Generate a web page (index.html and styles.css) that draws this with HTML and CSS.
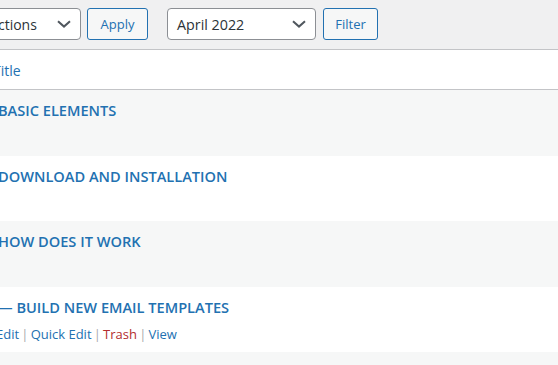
FILE: index.html
```
<!DOCTYPE html>
<html lang="en">
<head>
  <meta charset="UTF-8" />
  <title>Posts</title>
  <link rel="stylesheet" href="styles.css">
</head>
<body>
  <div class="page">
    <!-- Bulk actions / filters -->
    <div class="tablenav">
      <div class="fake-select bulk">
        <span>Bulk actions</span>
        <svg class="chev" width="14" height="8" viewBox="0 0 14 8"><path d="M1 1.2 L7 6.6 L13 1.2" fill="none" stroke="#50575e" stroke-width="2"/></svg>
      </div>
      <button class="btn apply">Apply</button>
      <div class="fake-select month">
        <span>April 2022</span>
        <svg class="chev" width="14" height="8" viewBox="0 0 14 8"><path d="M1 1.2 L7 6.6 L13 1.2" fill="none" stroke="#50575e" stroke-width="2"/></svg>
      </div>
      <button class="btn filter">Filter</button>
    </div>

    <div class="list">
      <div class="list-head"><a href="#">Title</a></div>

      <div class="row alt">
        <a class="row-title" href="#">BASIC ELEMENTS</a>
        <div class="row-actions hidden">Edit | Quick Edit | Trash | View</div>
      </div>
      <div class="row">
        <a class="row-title" href="#">DOWNLOAD AND INSTALLATION</a>
        <div class="row-actions hidden">Edit | Quick Edit | Trash | View</div>
      </div>
      <div class="row alt">
        <a class="row-title" href="#">HOW DOES IT WORK</a>
        <div class="row-actions hidden">Edit | Quick Edit | Trash | View</div>
      </div>
      <div class="row">
        <a class="row-title" href="#">— BUILD NEW EMAIL TEMPLATES</a>
        <div class="row-actions"><a href="#">Edit</a> <span class="sep">|</span> <a href="#">Quick Edit</a> <span class="sep">|</span> <a href="#" class="trash">Trash</a> <span class="sep">|</span> <a href="#">View</a></div>
      </div>
      <div class="row alt">
        <a class="row-title" href="#">&nbsp;</a>
      </div>
    </div>
  </div>
</body>
</html>
```

FILE: styles.css
```
body {
  margin: 0;
  background: #f0f0f1;
  font-family: 'Open Sans', 'Noto Sans', sans-serif;
  color: #3c434a;
  overflow: hidden;
}
a {
  color: #2271b1;
  text-decoration: none;
}
.page {
  width: 558px;
  height: 365px;
  overflow: hidden;
}
.tablenav {
  display: flex;
  align-items: center;
  height: 49px;
  padding-bottom: 1px;
  box-sizing: border-box;
}
.fake-select {
  display: flex;
  align-items: center;
  justify-content: space-between;
  height: 32px;
  box-sizing: border-box;
  border: 1px solid #8c8f94;
  border-radius: 4px;
  background: #fff;
  padding: 0 9px;
  font-size: 14px;
  color: #2c3338;
}
.fake-select.bulk {
  flex: none;
  width: 133px;
  margin-left: -52px;
}
.fake-select.month {
  flex: none;
  width: 149px;
  margin-left: 19px;
  font-size: 14.3px;
}
.chev {
  display: block;
}
.btn {
  flex: none;
  height: 32px;
  padding: 0;
  border: 1px solid #2271b1;
  border-radius: 3px;
  background: #f6f7f7;
  color: #2271b1;
  font-family: inherit;
  font-size: 13px;
}
.btn.apply {
  width: 61px;
  margin-left: 6px;
}
.btn.filter {
  width: 55px;
  margin-left: 7px;
}
.list {
  background: #fff;
  border-top: 1px solid #c3c4c7;
}
.list-head {
  height: 40px;
  box-sizing: border-box;
  padding-top: 1px;
  border-bottom: 1px solid #c3c4c7;
  display: flex;
  align-items: center;
  margin-left: -7px;
  font-size: 14px;
}
.row {
  height: 65.5px;
  box-sizing: border-box;
  padding: 8px 0 6px 0;
  margin-left: -2px;
  background: #fff;
}
.row.alt {
  background: #f6f7f7;
}
.row-title {
  display: block;
  height: 24px;
  line-height: 24px;
  font-size: 14.6px;
  font-weight: 600;
}
.row-actions {
  margin-left: -2px;
  padding-top: 5px;
  line-height: 20px;
  font-size: 13px;
  word-spacing: -1.2px;
  color: #a7aaad;
}
.row-actions a {
  word-spacing: normal;
}
.row-actions.hidden {
  visibility: hidden;
}
.row-actions .trash {
  color: #b32d2e;
}
```
